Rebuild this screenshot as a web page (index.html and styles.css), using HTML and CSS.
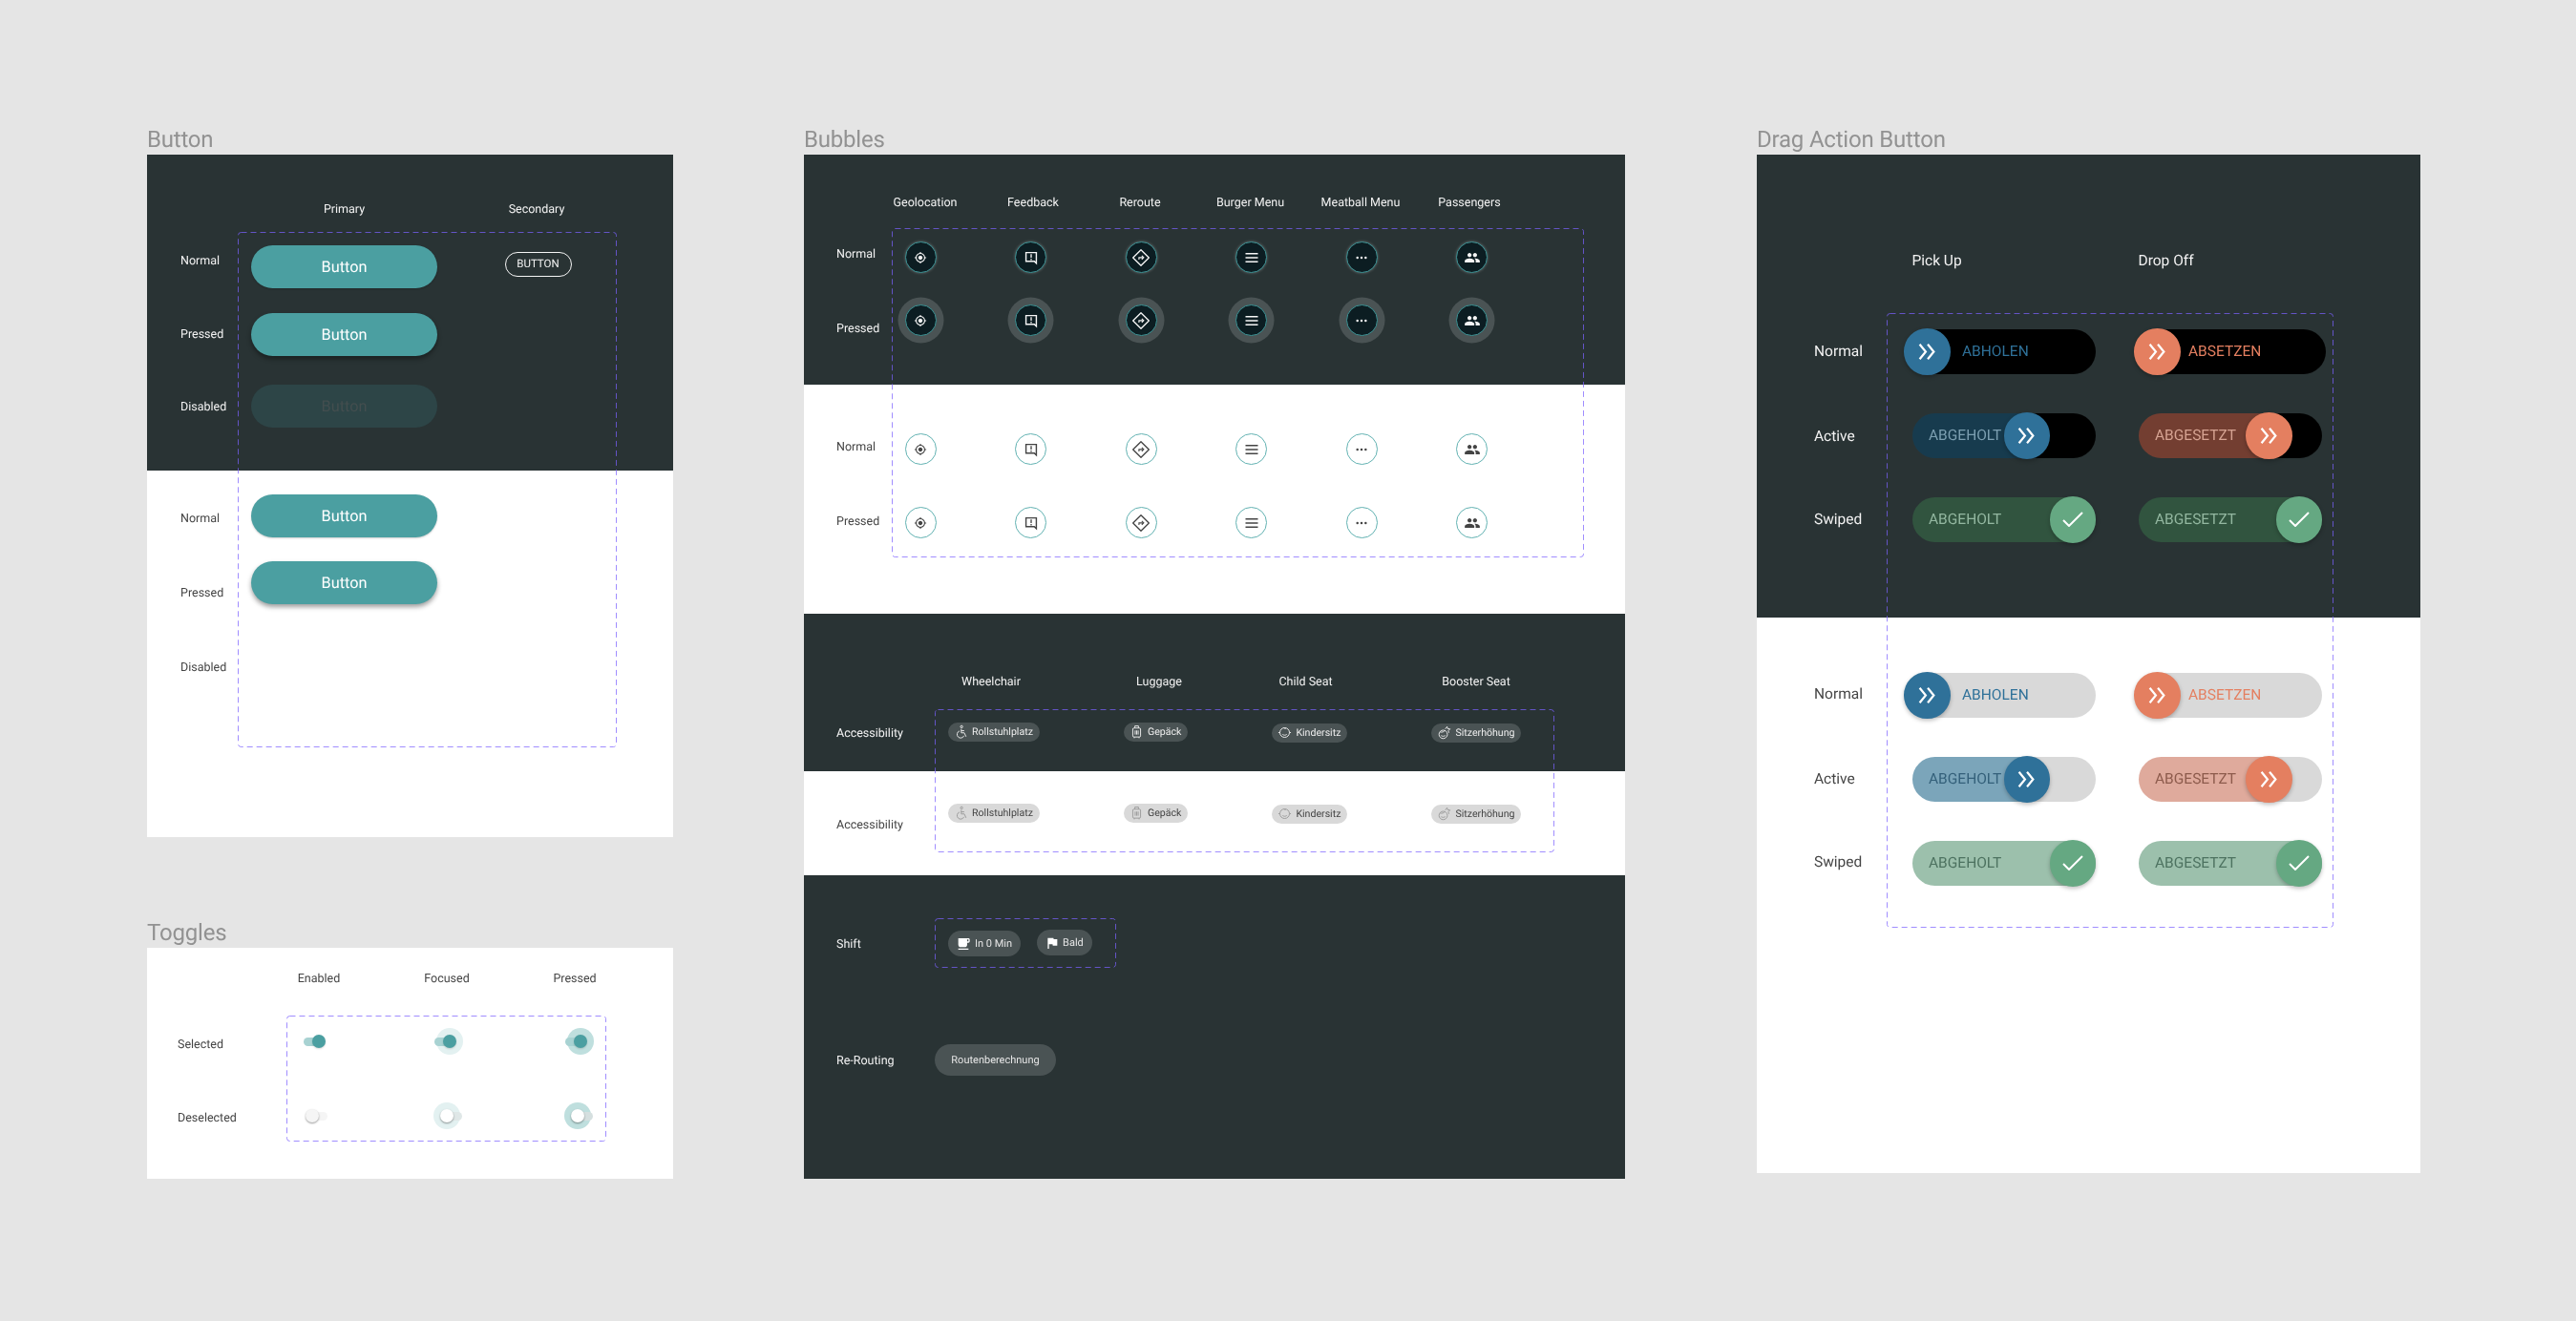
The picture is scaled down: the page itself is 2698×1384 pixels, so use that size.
FILE: index.html
```html
<!DOCTYPE html>
<html>
<head>
<meta charset="utf-8">
<title>Components</title>
<link rel="stylesheet" href="styles.css">
</head>
<body>
<svg class="defs" width="0" height="0">
  <symbol id="i-geo" viewBox="-6 -6 36 36"><path fill="currentColor" d="M12 8c-2.21 0-4 1.79-4 4s1.79 4 4 4 4-1.79 4-4-1.79-4-4-4zm8.94 3c-.46-4.17-3.77-7.48-7.94-7.94V1h-2v2.06C6.83 3.52 3.52 6.83 3.06 11H1v2h2.06c.46 4.17 3.77 7.48 7.94 7.94V23h2v-2.06c4.17-.46 7.48-3.77 7.94-7.94H23v-2h-2.06zM12 19c-3.87 0-7-3.13-7-7s3.13-7 7-7 7 3.13 7 7-3.13 7-7 7z"/></symbol>
  <symbol id="i-feedback" viewBox="0 0 24 24"><path fill="none" stroke="currentColor" stroke-width="1.7" d="M5.5 5.5h13v13.5l-2.6-2.6H5.500z"/><path fill="currentColor" d="M11.200 7.500h1.600v4.500h-1.600zM11.200 13.300h1.600v1.700h-1.600z"/></symbol>
  <symbol id="i-reroute" viewBox="0 0 24 24"><path fill="none" stroke="currentColor" stroke-width="1.600" stroke-linejoin="round" d="M12 2 22 12 12 22 2 12z"/><path fill="none" stroke="currentColor" stroke-width="1.300" d="M9.500 14.500v-2.700h4.500M13 9.500l2.400 2.300-2.400 2.300"/></symbol>
  <symbol id="i-burger" viewBox="0 0 24 24"><path fill="none" stroke="currentColor" stroke-width="1.800" d="M4.200 6.800h15.600M4.200 12h15.600M4.200 17.200h15.600"/></symbol>
  <symbol id="i-dots" viewBox="0 0 24 24"><circle fill="currentColor" cx="6.800" cy="12" r="1.500"/><circle fill="currentColor" cx="12" cy="12" r="1.500"/><circle fill="currentColor" cx="17.200" cy="12" r="1.500"/></symbol>
  <symbol id="i-people" viewBox="-2 -2 28 28"><path fill="currentColor" d="M16 11c1.660 0 2.990-1.340 2.990-3S17.660 5 16 5c-1.660 0-3 1.340-3 3s1.340 3 3 3zm-8 0c1.660 0 2.990-1.340 2.990-3S9.660 5 8 5C6.340 5 5 6.340 5 8s1.340 3 3 3zm0 2c-2.330 0-7 1.170-7 3.500V19h14v-2.500c0-2.330-4.670-3.500-7-3.500zm8 0c-.29 0-.62.02-.97.05 1.160.84 1.970 1.970 1.970 3.450V19h6v-2.500c0-2.330-4.670-3.500-7-3.500z"/></symbol>
  <symbol id="i-wheelchair" viewBox="0 0 24 24"><g fill="none" stroke="currentColor" stroke-width="1.500"><circle cx="13" cy="3.800" r="1.900"/><path d="M12.500 7.500V14h5l3 6.500M12.500 10.500h5"/><path d="M9.500 11a6 6 0 1 0 7.500 8"/></g></symbol>
  <symbol id="i-luggage" viewBox="0 0 24 24"><g fill="none" stroke="currentColor" stroke-width="1.500"><rect x="5.500" y="6" width="13" height="15" rx="2"/><path d="M9 6V2.500h6V6M9.500 10v7M12 10v7M14.500 10v7M8 21v2M16 21v2"/></g></symbol>
  <symbol id="i-baby" viewBox="0 0 24 24"><g fill="none" stroke="currentColor" stroke-width="1.500"><circle cx="12" cy="12" r="8"/><path d="M4 12H1.500M20 12h2.500M8.500 15c2 1.800 5 1.800 7 0M11 4c.5 1.500 2 1.800 3 1"/></g></symbol>
  <symbol id="i-booster" viewBox="0 0 24 24"><g fill="none" stroke="currentColor" stroke-width="1.500"><circle cx="10.500" cy="15" r="7"/><path d="M7 17c2 1.500 5 1.500 7 0M5 11c3 1 7 0 9-3M14 6l3-4 1 3.500 4 .5-3 3 1 3.500"/></g></symbol>
  <symbol id="i-cup" viewBox="0 0 24 24"><path fill="currentColor" d="M20 3H4v10c0 2.210 1.790 4 4 4h6c2.210 0 4-1.790 4-4v-3h2c1.110 0 2-.9 2-2V5c0-1.110-.89-2-2-2zm0 5h-2V5h2v3zM4 19h16v2H4z"/></symbol>
  <symbol id="i-flag" viewBox="0 0 24 24"><path fill="currentColor" d="M14.400 6L14 4H5v17h2v-7h5.600l.4 2h7V6z"/></symbol>
  <symbol id="i-chev" viewBox="0 0 18 16"><path fill="none" stroke="currentColor" stroke-width="2.100" d="M1.500 .6l6 7.400-6 7.400M9.500 .6l6 7.400-6 7.400"/></symbol>
  <symbol id="i-check" viewBox="0 0 22 16"><path fill="none" stroke="currentColor" stroke-width="2" d="M1 9l6 6L21 1"/></symbol>
</svg>

<div class="board">

<div class="col col-left">
  <h2 class="title">Button</h2>
  <div class="frame">
    <section class="sec dark sec-btn-dark">
      <div class="labels"><span>Normal</span><span>Pressed</span><span>Disabled</span></div>
      <div class="btn-grid">
        <span class="head">Primary</span><span class="head">Secondary</span>
        <a class="btn">Button</a><a class="btn-sec">BUTTON</a>
        <a class="btn btn-pressed">Button</a>
        <a class="btn btn-off">Button</a>
      </div>
    </section>
    <section class="sec light sec-btn-light">
      <div class="labels"><span>Normal</span><span>Pressed</span><span>Disabled</span></div>
      <div class="btn-grid">
        <a class="btn">Button</a>
        <a class="btn btn-pressed">Button</a>
      </div>
    </section>
    <div class="dash dash-btn"><svg><rect/></svg></div>
  </div>

  <h2 class="title title-toggles">Toggles</h2>
  <div class="frame">
    <section class="sec light sec-toggles">
      <div class="labels"><span>Selected</span><span>Deselected</span></div>
      <div class="toggle-body">
        <div class="heads heads-toggle"><span>Enabled</span><span>Focused</span><span>Pressed</span></div>
        <div class="toggle-row on">
          <span class="toggle"><i class="track"></i><i class="thumb"></i></span>
          <span class="toggle focused"><b class="halo"></b><i class="track"></i><i class="thumb"></i></span>
          <span class="toggle pressed"><b class="halo"></b><i class="track"></i><i class="thumb"></i></span>
        </div>
        <div class="toggle-row off">
          <span class="toggle"><i class="track"></i><i class="thumb"></i></span>
          <span class="toggle focused"><b class="halo"></b><i class="track"></i><i class="thumb"></i></span>
          <span class="toggle pressed"><b class="halo"></b><i class="track"></i><i class="thumb"></i></span>
        </div>
      </div>
    </section>
    <div class="dash dash-toggle"><svg><rect/></svg></div>
  </div>
</div>

<div class="col col-mid">
  <h2 class="title">Bubbles</h2>
  <div class="frame">
    <section class="sec dark sec-bub-dark">
      <div class="labels"><span>Normal</span><span>Pressed</span></div>
      <div>
        <div class="heads heads-bub"><span>Geolocation</span><span>Feedback</span><span>Reroute</span><span>Burger Menu</span><span>Meatball Menu</span><span>Passengers</span></div>
        <div class="bub-row">
          <span class="bubble"><svg><use href="#i-geo"/></svg></span>
          <span class="bubble"><svg><use href="#i-feedback"/></svg></span>
          <span class="bubble"><svg><use href="#i-reroute"/></svg></span>
          <span class="bubble"><svg><use href="#i-burger"/></svg></span>
          <span class="bubble"><svg><use href="#i-dots"/></svg></span>
          <span class="bubble"><svg><use href="#i-people"/></svg></span>
        </div>
        <div class="bub-row pressed">
          <span class="bubble"><svg><use href="#i-geo"/></svg></span>
          <span class="bubble"><svg><use href="#i-feedback"/></svg></span>
          <span class="bubble"><svg><use href="#i-reroute"/></svg></span>
          <span class="bubble"><svg><use href="#i-burger"/></svg></span>
          <span class="bubble"><svg><use href="#i-dots"/></svg></span>
          <span class="bubble"><svg><use href="#i-people"/></svg></span>
        </div>
      </div>
    </section>
    <section class="sec light sec-bub-light">
      <div class="labels"><span>Normal</span><span>Pressed</span></div>
      <div>
        <div class="bub-row">
          <span class="bubble"><svg><use href="#i-geo"/></svg></span>
          <span class="bubble"><svg><use href="#i-feedback"/></svg></span>
          <span class="bubble"><svg><use href="#i-reroute"/></svg></span>
          <span class="bubble"><svg><use href="#i-burger"/></svg></span>
          <span class="bubble"><svg><use href="#i-dots"/></svg></span>
          <span class="bubble"><svg><use href="#i-people"/></svg></span>
        </div>
        <div class="bub-row">
          <span class="bubble"><svg><use href="#i-geo"/></svg></span>
          <span class="bubble"><svg><use href="#i-feedback"/></svg></span>
          <span class="bubble"><svg><use href="#i-reroute"/></svg></span>
          <span class="bubble"><svg><use href="#i-burger"/></svg></span>
          <span class="bubble"><svg><use href="#i-dots"/></svg></span>
          <span class="bubble"><svg><use href="#i-people"/></svg></span>
        </div>
      </div>
    </section>
    <section class="sec dark sec-acc-dark">
      <div class="labels"><span>Accessibility</span></div>
      <div>
        <div class="heads heads-acc"><span>Wheelchair</span><span>Luggage</span><span>Child Seat</span><span>Booster Seat</span></div>
        <div class="chip-row">
          <span class="chip"><svg><use href="#i-wheelchair"/></svg>Rollstuhlplatz</span>
          <span class="chip"><svg><use href="#i-luggage"/></svg>Gepäck</span>
          <span class="chip chip-low"><svg><use href="#i-baby"/></svg>Kindersitz</span>
          <span class="chip chip-low"><svg><use href="#i-booster"/></svg>Sitzerhöhung</span>
        </div>
      </div>
    </section>
    <section class="sec light sec-acc-light">
      <div class="labels"><span>Accessibility</span></div>
      <div>
        <div class="chip-row">
          <span class="chip"><svg><use href="#i-wheelchair"/></svg>Rollstuhlplatz</span>
          <span class="chip"><svg><use href="#i-luggage"/></svg>Gepäck</span>
          <span class="chip chip-low"><svg><use href="#i-baby"/></svg>Kindersitz</span>
          <span class="chip chip-low"><svg><use href="#i-booster"/></svg>Sitzerhöhung</span>
        </div>
      </div>
    </section>
    <section class="sec dark sec-shift">
      <div class="labels"><span>Shift</span><span>Re-Routing</span></div>
      <div>
        <div class="shift-row">
          <span class="chip-big"><svg><use href="#i-cup"/></svg>In 0 Min</span>
          <span class="chip-big chip-bald"><svg><use href="#i-flag"/></svg>Bald</span>
        </div>
        <span class="chip-route">Routenberechnung</span>
      </div>
    </section>
    <div class="dash dash-bub"><svg><rect/></svg></div>
    <div class="dash dash-acc"><svg><rect/></svg></div>
    <div class="dash dash-shift"><svg><rect/></svg></div>
  </div>
</div>

<div class="col col-right">
  <h2 class="title">Drag Action Button</h2>
  <div class="frame">
    <section class="sec dark sec-drag-dark">
      <div class="labels"><span>Normal</span><span>Active</span><span>Swiped</span></div>
      <div>
        <div class="heads heads-drag"><span>Pick Up</span><span>Drop Off</span></div>
        <div class="drag-row">
          <div class="drag pick"><span class="knob blue start-pick"><svg><use href="#i-chev"/></svg></span><span class="txt-blue">ABHOLEN</span></div>
          <div class="drag wide"><span class="knob orange start-drop"><svg><use href="#i-chev"/></svg></span><span class="txt-orange">ABSETZEN</span></div>
        </div>
        <div class="drag-row">
          <div class="drag active-blue"><span>ABGEHOLT</span><span class="knob blue mid-pick"><svg><use href="#i-chev"/></svg></span></div>
          <div class="drag active-orange"><span>ABGESETZT</span><span class="knob orange mid-drop"><svg><use href="#i-chev"/></svg></span></div>
        </div>
        <div class="drag-row">
          <div class="drag done"><span>ABGEHOLT</span><span class="knob green end"><svg class="check"><use href="#i-check"/></svg></span></div>
          <div class="drag done"><span>ABGESETZT</span><span class="knob green end"><svg class="check"><use href="#i-check"/></svg></span></div>
        </div>
      </div>
    </section>
    <section class="sec light sec-drag-light">
      <div class="labels"><span>Normal</span><span>Active</span><span>Swiped</span></div>
      <div>
        <div class="drag-row">
          <div class="drag pick"><span class="knob blue start-pick"><svg><use href="#i-chev"/></svg></span><span class="txt-blue">ABHOLEN</span></div>
          <div class="drag pick drop"><span class="knob orange start-drop"><svg><use href="#i-chev"/></svg></span><span class="txt-orange">ABSETZEN</span></div>
        </div>
        <div class="drag-row">
          <div class="drag active-blue"><span>ABGEHOLT</span><span class="knob blue mid-pick"><svg><use href="#i-chev"/></svg></span></div>
          <div class="drag active-orange"><span>ABGESETZT</span><span class="knob orange mid-drop"><svg><use href="#i-chev"/></svg></span></div>
        </div>
        <div class="drag-row">
          <div class="drag done"><span>ABGEHOLT</span><span class="knob green end"><svg class="check"><use href="#i-check"/></svg></span></div>
          <div class="drag done"><span>ABGESETZT</span><span class="knob green end"><svg class="check"><use href="#i-check"/></svg></span></div>
        </div>
      </div>
    </section>
    <div class="dash dash-drag"><svg><rect/></svg></div>
  </div>
</div>

</div>
</body>
</html>
```

FILE: styles.css
```css
html, body {
    margin: 0;
    height: 1384px;
    overflow: hidden;
    background-color: #e5e5e5;
    font-family: Roboto, "Liberation Sans", sans-serif;
    text-rendering: geometricPrecision;
}
.defs {
    position: absolute;
}
.board {
    display: flex;
    gap: 137px;
    padding: 132px 0 0 154px;
    will-change: transform;
}
.col-left { width: 551px; flex: none; }
.col-mid { width: 860px; flex: none; }
.col-right { width: 695px; flex: none; margin-left: 1px; }

.title {
    margin: 0 0 2px 0;
    font-size: 24px;
    line-height: 28px;
    font-weight: 400;
    letter-spacing: -.2px;
    color: #929292;
}
.title-toggles { margin-top: 86px; }

.frame { position: relative; }

.sec {
    display: flex;
    box-sizing: border-box;
    font-size: 12.500px;
    line-height: 17px;
    font-weight: 400;
}
.dark { background-color: #293334; color: #f2f2f2; }
.light { background-color: #fff; color: #454545; }

.labels {
    display: grid;
    align-content: start;
    flex: none;
    white-space: nowrap;
}

.heads {
    display: grid;
    text-align: center;
    white-space: nowrap;
}

/* dashed outlines that run over the panels */
.dash { position: absolute; }
.dash svg { display: block; width: 100%; height: 100%; overflow: visible; }
.dash rect {
    x: .5px;
    y: .5px;
    width: calc(100% - 1px);
    height: calc(100% - 1px);
    rx: 3px;
    fill: none;
    stroke: #7b61ff;
    stroke-opacity: .72;
    stroke-dasharray: 6 4;
}
.dash-btn { left: 95px; top: 81px; width: 397px; height: 540px; }
.dash-toggle { left: 146px; top: 71px; width: 335px; height: 132px; }
.dash-bub { left: 92px; top: 77px; width: 725px; height: 345px; }
.dash-acc { left: 137px; top: 581px; width: 649px; height: 150px; }
.dash-shift { left: 137px; top: 800px; width: 190px; height: 52px; }
.dash-drag { left: 136px; top: 166px; width: 468px; height: 644px; }

/* Button */
.sec-btn-dark { height: 331px; padding-left: 35px; }
.sec-btn-dark .labels { width: 74px; padding-top: 103px; grid-template-rows: 77px 76px 16px; }
.sec-btn-dark .btn-grid { padding-top: 45px; grid-template-rows: 50px 71px 75px 45px; }
.sec-btn-light { height: 384px; padding-left: 35px; }
.sec-btn-light .labels { width: 74px; padding-top: 42px; grid-template-rows: 78px 78px 16px; }
.sec-btn-light .btn-grid { padding-top: 25px; grid-template-rows: 70px 45px; }
.btn-grid {
    display: grid;
    grid-template-columns: 195px 208px;
    align-items: start;
}
.head { text-align: center; line-height: 25px; }
.btn {
    grid-column: 1;
    height: 45px;
    border-radius: 23px;
    background-color: #4b9fa1;
    color: #fff;
    font-size: 16.300px;
    font-weight: 400;
    line-height: 45px;
    text-align: center;
    box-shadow: 0 1px 2px rgba(0, 0, 0, .2);
}
.btn-pressed { box-shadow: 0 3px 5px rgba(0, 0, 0, .38); }
.btn-off {
    background-color: #2d4547;
    color: #434e4f;
    box-shadow: none;
}
.btn-sec {
    grid-column: 2;
    justify-self: center;
    box-sizing: border-box;
    width: 70px;
    height: 26px;
    margin: 7px 0 0 3px;
    border: 1.5px solid #f5f5f5;
    border-radius: 13px;
    font-size: 11.500px;
    font-weight: 400;
    line-height: 22px;
    text-align: center;
}

/* Toggles */
.sec-toggles { height: 242px; padding-left: 32px; }
.sec-toggles .labels { width: 81px; padding-top: 93px; grid-template-rows: 77px 16px; }
.toggle-body { padding-top: 24px; }
.heads-toggle { grid-template-columns: 134px 134px 134px; }
.toggle-row {
    display: flex;
    gap: 115px;
    margin-top: 50px;
}
.heads-toggle + .toggle-row { margin-top: 43px; }
.toggle-row.on { padding-left: 51px; }
.toggle-row.off { padding-left: 54px; }
.toggle-row.off .toggle:first-child { margin-right: 4px; }
.toggle {
    position: relative;
    flex: none;
    width: 22px;
    height: 28px;
}
.track {
    position: absolute;
    left: 0;
    top: 9.5px;
    width: 22px;
    height: 9px;
    border-radius: 5px;
}
.thumb {
    position: absolute;
    top: 7px;
    width: 14px;
    height: 14px;
    border-radius: 50%;
}
.halo {
    position: absolute;
    top: 0;
    width: 28px;
    height: 28px;
    border-radius: 50%;
}
.on .track { background-color: #a8d2d2; }
.on .thumb { left: 9px; background-color: #4b9fa1; box-shadow: 0 1px 2px rgba(0, 0, 0, .15); }
.on .halo { left: 2px; }
.off .track { background-color: #f5f5f5; }
.off .thumb { left: -1px; background-color: #f5f5f5; box-shadow: 0 1px 2px rgba(0, 0, 0, .4); }
.off .halo { left: -8px; }
.off .focused .track { background-color: #dfe7e7; }
.off .pressed .track { background-color: #d5dfdf; }
.off .focused .thumb, .off .pressed .thumb { background-color: #fff; }
.focused .halo { background-color: #e3f1f1; }
.pressed .halo { background-color: #bfdfde; }

/* Bubbles */
.sec-bub-dark { height: 241px; padding-left: 34px; }
.sec-bub-dark .labels { width: 36px; padding-top: 96px; grid-template-rows: 78px 16px; }
.sec-bub-dark > div:last-child { padding-top: 42px; }
.heads-bub { grid-template-columns: 114px 112px 112px 119px 112px 116px; margin-bottom: 32px; }
.bub-row {
    display: flex;
    gap: 82.5px;
    padding-left: 35.500px;
    margin-bottom: 33px;
}
.bubble {
    display: flex;
    align-items: center;
    justify-content: center;
    box-sizing: border-box;
    flex: none;
    width: 33px;
    height: 33px;
    border-radius: 50%;
    border: 1px solid #3d9496;
    background-color: #0c1d22;
    color: #f5f5f5;
    box-shadow: 0 0 3px rgba(255, 255, 255, .3);
}
.bubble svg { width: 20px; height: 20px; }
.bub-row.pressed .bubble { box-shadow: 0 0 0 7.5px #4a5354; }
.light .bubble {
    background-color: #fff;
    border-color: #62b2b2;
    color: #444;
    box-shadow: none;
}
.sec-bub-light { height: 240px; padding-left: 34px; }
.sec-bub-light .labels { width: 36px; padding-top: 57px; grid-template-rows: 78px 16px; }
.sec-bub-light > div:last-child { padding-top: 51px; }
.sec-bub-light .bub-row { margin-bottom: 44px; }

/* Chips */
.sec-acc-dark { height: 165px; padding-left: 34px; }
.sec-acc-dark .labels { width: 84px; padding-top: 117px; }
.sec-acc-dark > div:last-child { padding-top: 63px; }
.heads-acc { grid-template-columns: 156px 196px 111px 246px; margin-bottom: 34px; }
.sec-acc-light { height: 109px; padding-left: 34px; }
.sec-acc-light .labels { width: 84px; padding-top: 48px; }
.sec-acc-light > div:last-child { padding-top: 34px; }
.chip-row {
    display: flex;
    align-items: flex-start;
    gap: 88px;
    padding-left: 33px;
}
.chip {
    display: flex;
    align-items: center;
    gap: 4px;
    flex: none;
    height: 19.500px;
    padding: 0 7px 0 6px;
    border-radius: 10px;
    background-color: #4a5354;
    color: #eee;
    font-size: 10.600px;
    font-weight: 400;
    white-space: nowrap;
}
.chip svg { width: 15px; height: 15px; flex: none; }
.chip-low { margin-top: 1px; }
.light .chip { background-color: #d9d9d9; color: #444; }
.light .chip svg { color: #9a9a9a; }

.sec-shift { height: 318px; padding-left: 34px; }
.sec-shift .labels { width: 103px; padding-top: 64px; grid-template-rows: 122px 16px; }
.sec-shift > div:last-child { padding-top: 58px; }
.shift-row {
    display: flex;
    align-items: flex-start;
    gap: 17px;
    padding-left: 14px;
    margin-bottom: 92px;
}
.chip-big {
    display: flex;
    align-items: center;
    gap: 4px;
    height: 27px;
    padding: 0 9px 0 8px;
    border-radius: 14px;
    background-color: #4a5354;
    color: #e6e6e6;
    font-size: 11px;
    font-weight: 400;
    white-space: nowrap;
}
.chip-big svg { width: 16px; height: 16px; color: #fff; }
.chip-bald { margin-top: -1px; gap: 3px; }
.chip-route {
    display: block;
    width: 127px;
    height: 33px;
    border-radius: 17px;
    background-color: #4a5354;
    color: #e6e6e6;
    font-size: 11px;
    font-weight: 400;
    line-height: 33px;
    text-align: center;
    white-space: nowrap;
}

/* Drag action button */
.sec-drag-dark { height: 485px; padding-left: 60px; }
.sec-drag-dark .labels { width: 90px; padding-top: 196px; grid-template-rows: 89px 87px 20px; }
.sec-drag-dark > div:last-child { padding-top: 101px; }
.sec-drag-light { height: 582px; padding-left: 60px; }
.sec-drag-light .labels { width: 90px; padding-top: 70px; grid-template-rows: 89px 87px 20px; }
.sec-drag-light > div:last-child { padding-top: 58px; }
.sec-drag-dark .labels span, .sec-drag-light .labels span, .heads-drag {
    font-size: 15.500px;
    line-height: 20px;
}
.heads-drag {
    grid-template-columns: 237px auto;
    text-align: left;
    padding-left: 12.500px;
    margin-bottom: 62px;
}
.drag-row {
    display: flex;
    gap: 45px;
    padding-left: 13px;
    margin-bottom: 41px;
}
.drag {
    position: relative;
    display: flex;
    align-items: center;
    box-sizing: border-box;
    flex: none;
    width: 192px;
    height: 47px;
    padding-left: 17px;
    border-radius: 24px;
    font-size: 15.500px;
    font-weight: 400;
    background-color: #000;
}
.light .drag { background-color: #d9d9d9; }
.drag.pick, .drag.wide { padding-left: 52px; }
.drag.wide { width: 196px; }
.knob {
    position: absolute;
    top: -1px;
    display: flex;
    align-items: center;
    justify-content: center;
    width: 48.500px;
    height: 48.500px;
    border-radius: 50%;
    color: #fff;
    box-shadow: 0 2px 4px rgba(0, 0, 0, .25);
}
.knob svg { width: 19px; height: 17px; }
.knob svg.check { width: 22px; height: 16px; }
.blue { background-color: #2f7199; }
.orange { background-color: #e47f60; }
.green { background-color: #65a882; }
.txt-blue { color: #2f7199; }
.txt-orange { color: #e47f60; }
.start-pick { left: -9px; }
.start-drop { left: -5px; }
.mid-pick { left: 95.500px; }
.mid-drop { left: 112px; }
.end { left: 143.500px; }
.drag.active-blue { background: linear-gradient(to right, #173b4e 119px, #000 119px); color: #7c9fb1; }
.drag.active-orange { background: linear-gradient(to right, #733e31 136px, #000 136px); color: #d6a392; }
.drag.done { background: #31543f; color: #93b7a0; }
.light .drag.active-blue { background: linear-gradient(to right, #7ba5ba 119px, #d9d9d9 119px); color: #34607a; }
.light .drag.active-orange { background: linear-gradient(to right, #dfaa9c 136px, #d9d9d9 136px); color: #8d5b4c; }
.light .drag.done { background: #9cc0ac; color: #4d7260; }
```
